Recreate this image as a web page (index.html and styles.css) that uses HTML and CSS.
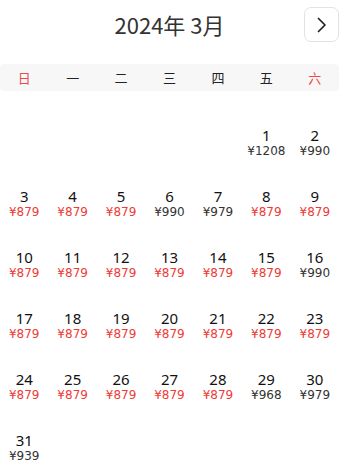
FILE: index.html
```html
<!DOCTYPE html>
<html lang="zh">
<head>
<meta charset="utf-8">
<link rel="stylesheet" href="styles.css">
</head>
<body>
<div class="cal">
  <div class="head">
    <div class="title">2024年 3月</div>
    <button class="next" aria-label="下个月">
      <svg width="14" height="16" viewBox="0 0 14 16"><path d="M3.5 1.5 L10 8 L3.5 14.5" fill="none" stroke="#222" stroke-width="1.7" stroke-linecap="round" stroke-linejoin="round"/></svg>
    </button>
  </div>
  <div class="week">
    <span class="we">日</span><span>一</span><span>二</span><span>三</span><span>四</span><span>五</span><span class="we">六</span>
  </div>
  <div class="days">
    <div class="day"></div><div class="day"></div><div class="day"></div><div class="day"></div><div class="day"></div>
    <div class="day"><span class="n">1</span><span class="p">¥1208</span></div>
    <div class="day"><span class="n">2</span><span class="p">¥990</span></div>
    <div class="day"><span class="n">3</span><span class="p low">¥879</span></div>
    <div class="day"><span class="n">4</span><span class="p low">¥879</span></div>
    <div class="day"><span class="n">5</span><span class="p low">¥879</span></div>
    <div class="day"><span class="n">6</span><span class="p">¥990</span></div>
    <div class="day"><span class="n">7</span><span class="p">¥979</span></div>
    <div class="day"><span class="n">8</span><span class="p low">¥879</span></div>
    <div class="day"><span class="n">9</span><span class="p low">¥879</span></div>
    <div class="day"><span class="n">10</span><span class="p low">¥879</span></div>
    <div class="day"><span class="n">11</span><span class="p low">¥879</span></div>
    <div class="day"><span class="n">12</span><span class="p low">¥879</span></div>
    <div class="day"><span class="n">13</span><span class="p low">¥879</span></div>
    <div class="day"><span class="n">14</span><span class="p low">¥879</span></div>
    <div class="day"><span class="n">15</span><span class="p low">¥879</span></div>
    <div class="day"><span class="n">16</span><span class="p">¥990</span></div>
    <div class="day"><span class="n">17</span><span class="p low">¥879</span></div>
    <div class="day"><span class="n">18</span><span class="p low">¥879</span></div>
    <div class="day"><span class="n">19</span><span class="p low">¥879</span></div>
    <div class="day"><span class="n">20</span><span class="p low">¥879</span></div>
    <div class="day"><span class="n">21</span><span class="p low">¥879</span></div>
    <div class="day"><span class="n">22</span><span class="p low">¥879</span></div>
    <div class="day"><span class="n">23</span><span class="p low">¥879</span></div>
    <div class="day"><span class="n">24</span><span class="p low">¥879</span></div>
    <div class="day"><span class="n">25</span><span class="p low">¥879</span></div>
    <div class="day"><span class="n">26</span><span class="p low">¥879</span></div>
    <div class="day"><span class="n">27</span><span class="p low">¥879</span></div>
    <div class="day"><span class="n">28</span><span class="p low">¥879</span></div>
    <div class="day"><span class="n">29</span><span class="p">¥968</span></div>
    <div class="day"><span class="n">30</span><span class="p">¥979</span></div>
    <div class="day"><span class="n">31</span><span class="p">¥939</span></div>
  </div>
</div>
</body>
</html>
```
FILE: styles.css
```css
html, body {
  margin: 0;
  padding: 0;
  background: #fff;
}
body {
  min-height: 473px;
}
.cal {
  width: 339px;
  padding-bottom: 16px;
  font-family: "Noto Sans", "Noto Sans CJK SC", sans-serif;
  color: #222;
}
.head {
  position: relative;
  height: 52px;
  display: flex;
  align-items: center;
  justify-content: center;
}
.title {
  font-family: "Noto Sans CJK SC", sans-serif;
  font-size: 22px;
  color: #333;
  line-height: 30px;
  margin-top: -4px;
}
.next {
  position: absolute;
  right: 0;
  top: 7px;
  width: 35px;
  height: 35px;
  border: 1px solid #e2e2e2;
  border-radius: 7px;
  background: #fff;
  padding: 0;
  display: flex;
  align-items: center;
  justify-content: center;
}
.week {
  margin-top: 12px;
  height: 27px;
  background: #f7f7f7;
  border-radius: 4px;
  display: grid;
  grid-template-columns: repeat(7, 1fr);
  align-items: center;
  font-family: "Noto Sans CJK SC", sans-serif;
  font-size: 13px;
  color: #222;
  text-align: center;
}
.week .we {
  color: #ec4a4a;
}
.days {
  display: grid;
  grid-template-columns: repeat(7, 1fr);
  grid-auto-rows: 61px;
}
.day {
  display: flex;
  flex-direction: column;
  align-items: center;
  padding-top: 35px;
}
.n {
  font-size: 15px;
  line-height: 18px;
  color: #111;
}
.p {
  font-family: "DejaVu Sans", sans-serif;
  font-size: 12px;
  line-height: 15px;
  color: #333;
}
.p.low {
  color: #ee3b36;
}
```
